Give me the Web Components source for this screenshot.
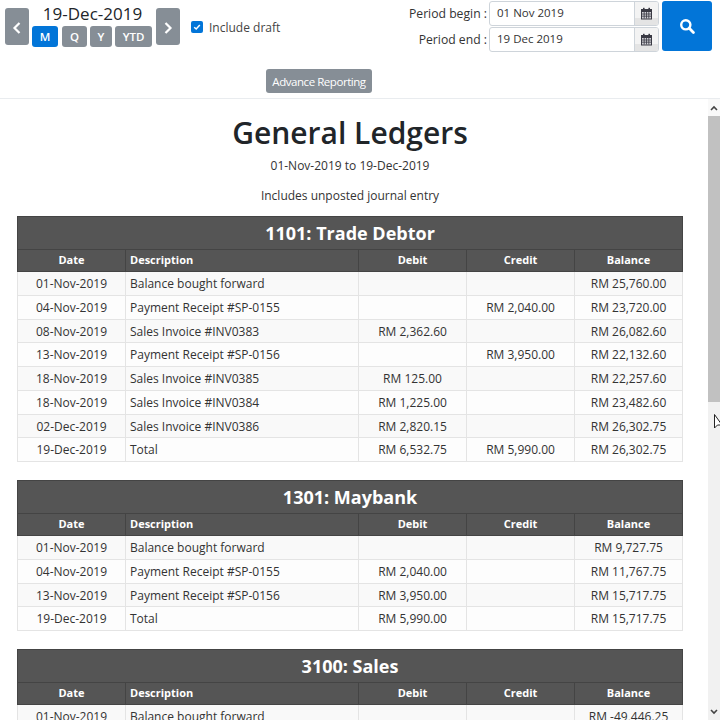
<!DOCTYPE html>
<html><head><meta charset="utf-8"><title>General Ledgers</title>
<style>
html,body{margin:0;padding:0;height:720px;overflow:hidden;background:#fff}
body{font-family:"Open Sans",sans-serif;color:#212529}
</style></head>
<body>
<ledger-app></ledger-app>
<script>
const sheet = `*{box-sizing:border-box}`;
function def(name, html, init){
  customElements.define(name, class extends HTMLElement{
    constructor(){super();const r=this.attachShadow({mode:'open'});r.innerHTML='<style>'+sheet+'</style>'+html(this);}
    connectedCallback(){ if(init) init(this); }
  });
}
const calIcon = `<svg width="13" height="13" viewBox="0 0 13 13"><rect x="1" y="2" width="11" height="10.5" fill="#3a3a44"/><rect x="2" y="5" width="9" height="6.5" fill="#cfcfd4"/><path d="M2 7h9M2 9.2h9M4.2 5v6.5M6.5 5v6.5M8.8 5v6.5" stroke="#3a3a44" stroke-width=".8"/><rect x="3" y=".8" width="1.6" height="2.6" fill="#3a3a44"/><rect x="8.4" y=".8" width="1.6" height="2.6" fill="#3a3a44"/></svg>`;

def('pill-button', ()=>`<style>
:host{display:block}
button{display:flex;align-items:center;justify-content:center;height:100%;width:100%;border:0;margin:0;padding:var(--pt,0) 0 0;border-radius:3px;background:var(--bg,#868e96);color:#fff;font:var(--fw,600) var(--fs,11.5px)/1 "Open Sans",sans-serif;letter-spacing:var(--ls,0)}
</style><button part="b"><slot></slot></button>`);

def('date-field', (h)=>`<style>
:host{display:flex;align-items:center;height:25px;justify-content:flex-end}
.l{margin-right:2px;color:#333;white-space:nowrap;font-size:12.2px;padding-bottom:1px}
.box{display:flex;width:170px;height:25px;border:1px solid #ced4da;border-radius:3px;background:#fff;overflow:hidden}
.v{flex:1;padding-left:7px;line-height:22px;font-size:11.5px;color:#333}
.a{width:24px;border-left:1px solid #ced4da;background:linear-gradient(#f3f3f3 0 70%,#e4e4e4 70%);display:flex;align-items:center;justify-content:center}
</style><span class="l">${h.getAttribute('label')}</span><div class="box"><div class="v">${h.getAttribute('value')}</div><div class="a">${calIcon}</div></div>`);

def('top-bar', ()=>`<style>
:host{display:block;height:99px;border-bottom:1px solid #e9ecef;background:#fff;font-size:12px}
.row{display:flex;height:69px;padding:1px 8px 0 5px}
.nav{width:24px;height:37px;margin-top:7px;--fs:12px;--pt:3px}
.nav svg{display:block}
.mid{width:121px;margin:0 3px;padding-top:1px}
.title{text-align:center;font-size:17px;line-height:23px;color:#212529;height:24px}
.btns{display:flex;gap:4px;height:21px}
.btns pill-button:nth-child(1){width:26px;--bg:#0275d8}
.btns pill-button:nth-child(2){width:25px}
.btns pill-button:nth-child(3){width:22px;margin-left:-1px}
.btns pill-button:nth-child(4){width:37px;margin-left:-1px}
.chk{display:flex;align-items:center;margin:17px 0 0 11px;height:18px;color:#444;font-size:12px}
.box{width:12px;height:12px;border-radius:2px;background:#0275d8;margin-right:6px;display:flex;align-items:center;justify-content:center}
.sp{flex:1}
.period{display:flex;flex-direction:column;gap:1px}
.search{width:50px;height:50px;margin-left:3px;--bg:#0275d8}
.adv{padding-left:266px}
.adv pill-button{width:106px;height:24px;--fw:400;--fs:11.5px;--ls:-.45px;--pt:1px}
</style>
<div class="row">
<pill-button class="nav"><svg width="10" height="14" viewBox="0 0 10 14"><path d="M7.5 2 2.5 7l5 5" fill="none" stroke="#fff" stroke-width="2.2"/></svg></pill-button>
<div class="mid"><div class="title">19-Dec-2019</div><div class="btns"><pill-button>M</pill-button><pill-button>Q</pill-button><pill-button>Y</pill-button><pill-button>YTD</pill-button></div></div>
<pill-button class="nav"><svg width="10" height="14" viewBox="0 0 10 14"><path d="M2.5 2l5 5-5 5" fill="none" stroke="#fff" stroke-width="2.2"/></svg></pill-button>
<label class="chk"><span class="box"><svg width="8" height="8" viewBox="0 0 8 8"><path d="M1.2 4.2 3.2 6 6.8 2" fill="none" stroke="#fff" stroke-width="1.5"/></svg></span>Include draft</label>
<div class="sp"></div>
<div class="period"><date-field label="Period begin :" value="01 Nov 2019"></date-field><date-field label="Period end :" value="19 Dec 2019"></date-field></div>
<pill-button class="search"><svg width="16" height="16" viewBox="0 0 16 16"><circle cx="6.8" cy="6.8" r="4.6" fill="none" stroke="#fff" stroke-width="2.4"/><path d="M10.3 10.3 14.4 14.4" stroke="#fff" stroke-width="2.8" stroke-linecap="round"/></svg></pill-button>
</div>
<div class="adv"><pill-button>Advance Reporting</pill-button></div>`);

def('ledger-table', (h)=>{
  const rows = JSON.parse(h.getAttribute('rows'));
  return `<style>
:host{display:block;margin-bottom:18px;font-size:12px;color:#333}
table{width:665px;border-collapse:collapse;table-layout:fixed;line-height:18px}
th,td{padding:0 5px;border:1px solid #e4e4e4;font-weight:400;text-align:center;white-space:nowrap;overflow:hidden}
td{height:23.75px;padding-top:1.4px}
thead th{background:#555;color:#fff;border-color:#444;font-weight:700;font-size:11px;height:22px;line-height:14px;padding:0 4px .5px}
thead th.cap{font-size:18px;font-weight:700;height:33px;line-height:24px;padding-bottom:1px}
.lf{text-align:left;padding-left:4px}
tbody tr:nth-child(odd){background:#f9f9f9}
tbody tr:nth-child(even){background:#fdfdfd}
</style><table><colgroup><col style="width:108px"><col style="width:233px"><col style="width:108px"><col style="width:108px"><col style="width:108px"></colgroup>
<thead><tr><th class="cap" colspan="5">${h.getAttribute('heading')}</th></tr>
<tr><th>Date</th><th class="lf">Description</th><th>Debit</th><th>Credit</th><th>Balance</th></tr></thead>
<tbody>${rows.map(r=>`<tr><td>${r[0]}</td><td class="lf">${r[1]}</td><td>${r[2]}</td><td>${r[3]}</td><td>${r[4]}</td></tr>`).join('')}</tbody></table>`;
});

def('fake-scrollbar', ()=>`<style>
:host{display:flex;flex-direction:column;width:12px;height:621px;background:#f1f1f1;flex:none}
.a{height:17px;display:flex;align-items:center;justify-content:center;background:#f9f9f9}
.t{height:286px;background:#c1c1c1}
.s{flex:1}
.e{background:#f1f1f1}
</style><div class="a"><svg width="8" height="6" viewBox="0 0 8 6"><path d="M1 5 4 2l3 3" fill="none" stroke="#444" stroke-width="1.6"/></svg></div><div class="t"></div><div class="s"></div><div class="a e"><svg width="8" height="6" viewBox="0 0 8 6"><path d="M1 1l3 3 3-3" fill="none" stroke="#444" stroke-width="1.6"/></svg></div>`);

const T=[
{h:'1101: Trade Debtor',r:[
['01-Nov-2019','Balance bought forward','','','RM 25,760.00'],
['04-Nov-2019','Payment Receipt #SP-0155','','RM 2,040.00','RM 23,720.00'],
['08-Nov-2019','Sales Invoice #INV0383','RM 2,362.60','','RM 26,082.60'],
['13-Nov-2019','Payment Receipt #SP-0156','','RM 3,950.00','RM 22,132.60'],
['18-Nov-2019','Sales Invoice #INV0385','RM 125.00','','RM 22,257.60'],
['18-Nov-2019','Sales Invoice #INV0384','RM 1,225.00','','RM 23,482.60'],
['02-Dec-2019','Sales Invoice #INV0386','RM 2,820.15','','RM 26,302.75'],
['19-Dec-2019','Total','RM 6,532.75','RM 5,990.00','RM 26,302.75']]},
{h:'1301: Maybank',r:[
['01-Nov-2019','Balance bought forward','','','RM 9,727.75'],
['04-Nov-2019','Payment Receipt #SP-0155','RM 2,040.00','','RM 11,767.75'],
['13-Nov-2019','Payment Receipt #SP-0156','RM 3,950.00','','RM 15,717.75'],
['19-Dec-2019','Total','RM 5,990.00','','RM 15,717.75']]},
{h:'3100: Sales',r:[['01-Nov-2019','Balance bought forward','','','RM -49,446.25']]}
];
const esc=s=>s.replace(/&/g,'&amp;').replace(/'/g,'&#39;');
def('ledger-app', ()=>`<style>
:host{display:block;width:720px;height:720px;overflow:hidden;position:relative;background:#fff}
.body{display:flex;height:621px}
.main{flex:1;overflow:hidden;padding:0 0 0 17px}
h1{margin:16px 0 0;width:666px;text-align:center;font-weight:600;font-size:30px;line-height:36px;color:#212529}
p{margin:0;width:666px;text-align:center;font-size:12px;line-height:18px;color:#333}
.d{margin-top:6px}.n{margin-top:12px;margin-bottom:11px}
.cursor{position:absolute;left:714px;top:414px}
</style><top-bar></top-bar><div class="body"><div class="main"><h1>General Ledgers</h1><p class="d">01-Nov-2019 to 19-Dec-2019</p><p class="n">Includes unposted journal entry</p>
${T.map(t=>`<ledger-table heading="${t.h}" rows='${esc(JSON.stringify(t.r))}'></ledger-table>`).join('')}</div><fake-scrollbar></fake-scrollbar></div>
<svg class="cursor" width="8" height="18" viewBox="0 0 8 18"><path d="M.5.5V14l3-3h4.5z" fill="#fff" stroke="#222" stroke-width="1"/></svg>`);
</script>
</body></html>
